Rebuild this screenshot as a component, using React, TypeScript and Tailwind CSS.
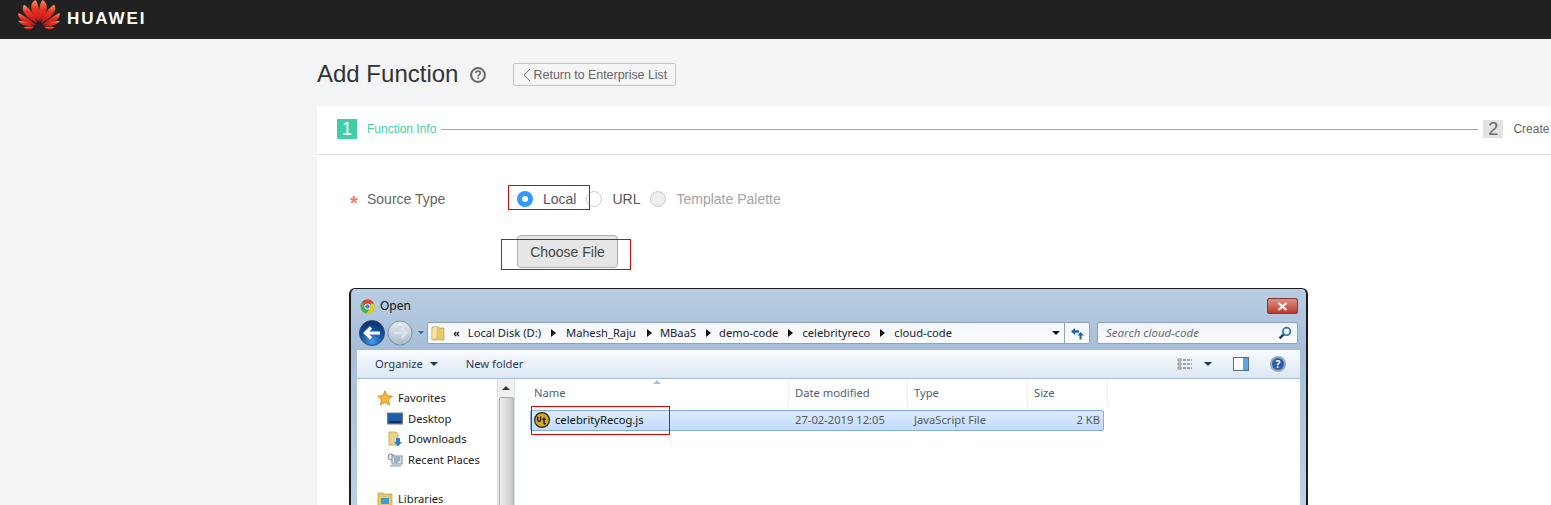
import React from 'react'

const sans = { fontFamily: '"Liberation Sans", Arial, sans-serif' }
const ui = { fontFamily: '"Noto Sans", sans-serif' }

const HuaweiLogo = () => (
  <svg width="42" height="30" viewBox="0 0 42 30" className="shrink-0">
    <defs>
      <linearGradient id="petal" x1="0" y1="0" x2="0" y2="1">
        <stop offset="0" stopColor="#f29a63" />
        <stop offset="0.4" stopColor="#e8331f" />
        <stop offset="1" stopColor="#c4161c" />
      </linearGradient>
    </defs>
    {[false, true].map((flip) => (
      <g key={String(flip)} transform={flip ? 'matrix(-1 0 0 1 42 0)' : undefined} fill="url(#petal)">
        <path d="M20.5 21.5 C15.5 17 12.4 10 13.4 5.2 C14 2.8 15.6 0.6 17.4 0 C21 4 22 14 20.5 21.5Z" />
        <path d="M18.9 23 C12.6 20 6 15 4.8 9.8 C4.4 8 5 6.2 6 4.6 C11 8 17.6 15.6 18.9 23Z" />
        <path d="M17.8 25 C11 24.6 3 21.6 0.8 16.8 C0.2 15.4 0.2 14.2 0.4 13 C5.6 15.4 13.6 20.4 17.8 25Z" />
        <path d="M16.8 26.4 C10.6 27 3.6 25.6 0 21 C6 20.4 12 23.4 16.8 26.4Z" />
        <path d="M15.6 27.4 C12.6 30 8.6 30 5.6 27.4 C9 26.6 12.4 26.8 15.6 27.4Z" />
      </g>
    ))}
  </svg>
)

const HelpIcon = () => (
  <svg width="16" height="16" viewBox="0 0 16 16" className="shrink-0">
    <circle cx="8" cy="8" r="6.9" fill="none" stroke="#666" strokeWidth="2" />
    <path d="M5.8 6.3 C5.8 4.8 6.8 4.1 8 4.1 C9.3 4.1 10.3 4.9 10.3 6.1 C10.3 7.6 8.1 7.7 8.1 9.5" fill="none" stroke="#666" strokeWidth="1.6" />
    <rect x="7.3" y="10.4" width="1.6" height="1.6" fill="#666" />
  </svg>
)

const ChromeIcon = () => (
  <svg width="15" height="15" viewBox="0 0 16 16" className="shrink-0">
    <circle cx="8" cy="8" r="7.5" fill="#4caf50" />
    <path d="M8 .5 A7.5 7.5 0 0 1 14.9 5 L8 5 A3 3 0 0 0 5.3 6.8 L2.4 3 A7.5 7.5 0 0 1 8 .5Z" fill="#e0442e" />
    <path d="M14.9 5 A7.5 7.5 0 0 1 7.2 15.5 L10.6 9.5 A3 3 0 0 0 10.6 5Z" fill="#f5c518" />
    <circle cx="8" cy="8" r="3.2" fill="#fff" />
    <circle cx="8" cy="8" r="2.4" fill="#3f83e8" />
  </svg>
)

const NavButtons = () => (
  <svg width="68" height="26" viewBox="0 0 68 26" className="shrink-0">
    <defs>
      <radialGradient id="backFill" cx="0.5" cy="0.85" r="0.8">
        <stop offset="0" stopColor="#3f9be8" />
        <stop offset="0.6" stopColor="#15509f" />
        <stop offset="1" stopColor="#0c2f6e" />
      </radialGradient>
      <linearGradient id="fwdFill" x1="0" y1="0" x2="0" y2="1">
        <stop offset="0" stopColor="#e4ebf3" />
        <stop offset="1" stopColor="#a9bacb" />
      </linearGradient>
    </defs>
    <circle cx="41" cy="13" r="12" fill="url(#fwdFill)" stroke="#7e8fa1" />
    <path d="M34 13 H47 M42.5 8.5 L47.5 13 L42.5 17.5" fill="none" stroke="#dbe3ea" strokeWidth="2.6" />
    <circle cx="13" cy="13" r="12.5" fill="url(#backFill)" stroke="#2d4f80" />
    <path d="M21 13 H7 M12 7.5 L6.4 13 L12 18.5" fill="none" stroke="#fff" strokeWidth="3.2" />
    <path d="M58 10.5 H66 L62 15Z" fill="#2c6db0" stroke="#dce8f3" strokeWidth="0.6" />
  </svg>
)

const FolderIcon = ({ size = 14 }: { size?: number }) => (
  <svg width={size} height={size + 2} viewBox="0 0 14 16" className="shrink-0">
    <path d="M1 2 H7 L8 3 H13 V15 H1Z" fill="#e9c86a" stroke="#b89a45" strokeWidth="0.6" />
    <path d="M1 15 L1 3 L6 1 V13Z" fill="#f6e3a2" stroke="#c8a955" strokeWidth="0.5" />
  </svg>
)

const Crumb = ({ text, left, right }: { text: string; left: number; right: number }) => (
  <>
    <span>{text}</span>
    <span className="border-y-[4px] border-l-[5px] border-y-transparent border-l-[#111] shrink-0" style={{ marginLeft: left, marginRight: right }} />
  </>
)

const AddressBar = () => (
  <div className="flex-1 h-[22px] flex items-center bg-gradient-to-b from-[#f3f7fb] to-[#fbfcfe] border border-[#8ea3b8] rounded-[2px] text-[11.2px] text-[#1a1a2a] pl-[3px]" style={ui}>
    <FolderIcon />
    <span className="ml-[8px] mr-[8px] font-bold text-[11px]">«</span>
    <Crumb text="Local Disk (D:)" left={10} right={10} />
    <Crumb text="Mahesh_Raju" left={11} right={8} />
    <Crumb text="MBaaS" left={10} right={8} />
    <Crumb text="demo-code" left={10} right={9} />
    <Crumb text="celebrityreco" left={10} right={9} />
    <span>cloud-code</span>
    <span className="ml-auto mr-[4px] border-x-[4px] border-t-[4px] border-x-transparent border-t-[#111]" />
    <div className="w-[25px] h-full border-l border-[#8ea3b8] flex items-center justify-center">
      <svg width="15" height="15" viewBox="0 0 15 15">
        <path d="M1 5.5 L5 2 V4.2 H9 V6.8 H5 V9Z" fill="#2a5f9e" />
        <path d="M14 9.5 L10.5 6 L7.5 9.5 H9.5 V13.5 H11.5 V9.5Z" fill="#2a5f9e" />
      </svg>
    </div>
  </div>
)

const SearchBox = () => (
  <div className="w-[201px] h-[22px] ml-[7px] flex items-center justify-between pl-[8px] pr-[5px] bg-gradient-to-b from-[#eef3f8] to-[#fbfcfe] border border-[#8ea3b8] rounded-[2px]">
    <span className="italic text-[11.5px] text-[#6d6d6d]" style={ui}>Search cloud-code</span>
    <svg width="14" height="14" viewBox="0 0 14 14">
      <circle cx="8.6" cy="5.4" r="3.7" fill="none" stroke="#2f74b5" strokeWidth="1.8" />
      <path d="M5.6 8.4 L1.6 12.4" stroke="#1e3f6e" strokeWidth="2.4" />
    </svg>
  </div>
)

const Toolbar = () => (
  <div className="h-[29px] flex items-center pl-[18px] pr-[14px] bg-gradient-to-b from-[#f9fbfe] to-[#dce7f3] border-b border-[#a9bfd6] text-[11.2px] text-[#1e395b]" style={ui}>
    <span>Organize</span>
    <span className="ml-[7px] border-x-[4px] border-t-[4px] border-x-transparent border-t-[#1e395b]" />
    <span className="ml-[28px]">New folder</span>
    <svg width="16" height="14" viewBox="0 0 16 14" className="ml-auto">
      <path d="M1 2h3v2H1zM1 6h3v2H1zM1 10h3v2H1z" fill="#fff" stroke="#555" strokeWidth="0.7" />
      <path d="M6 3h9M6 7h9M6 11h9" stroke="#555" strokeWidth="1" strokeDasharray="3 1" />
    </svg>
    <span className="ml-[11px] border-x-[4px] border-t-[4px] border-x-transparent border-t-[#1e395b]" />
    <div className="ml-[21px] w-[16px] h-[14px] border border-[#4f6f8c] bg-white flex justify-end">
      <div className="w-[5px] bg-[#5aa9dc]" />
    </div>
    <div className="ml-[21px] w-[16px] h-[16px] rounded-full bg-[#2a5db0] border-2 border-[#9aa7b5] text-white text-[10px] font-bold flex items-center justify-center leading-none">?</div>
  </div>
)

const SideIcon = ({ kind }: { kind: string }) => {
  if (kind === 'star') {
    return (
      <svg width="16" height="16" viewBox="0 0 16 16" className="shrink-0">
        <path d="M8 .8 L10.2 5.6 L15.4 6.2 L11.5 9.7 L12.6 15 L8 12.3 L3.4 15 L4.5 9.7 L.6 6.2 L5.8 5.6Z" fill="#f6b73c" stroke="#d77f24" strokeWidth="0.8" />
      </svg>
    )
  }
  if (kind === 'desktop') {
    return (
      <svg width="16" height="14" viewBox="0 0 16 14" className="shrink-0">
        <rect x="0.5" y="1" width="15" height="11" fill="#1f5fa8" stroke="#6a7a8a" />
        <rect x="2" y="9" width="12" height="2" fill="#0c2f58" />
      </svg>
    )
  }
  if (kind === 'recent') {
    return (
      <svg width="16" height="15" viewBox="0 0 16 15" className="shrink-0">
        <circle cx="4" cy="4" r="3" fill="#e6e6e6" stroke="#888" />
        <rect x="5" y="3" width="10" height="8" fill="#dbe6f0" stroke="#7d8b99" />
        <path d="M7 5h6M7 7h6M7 9h4" stroke="#4a7fb0" />
        <rect x="3" y="12" width="11" height="2" fill="#bcc6d0" />
      </svg>
    )
  }
  if (kind === 'library') {
    return (
      <svg width="16" height="16" viewBox="0 0 16 16" className="shrink-0">
        <path d="M1 2 H6 L7 3 H15 V15 H1Z" fill="#e9c86a" stroke="#b89a45" strokeWidth="0.7" />
        <rect x="4" y="7" width="8" height="6" fill="#3f9fc9" />
      </svg>
    )
  }
  return (
    <svg width="16" height="16" viewBox="0 0 16 16" className="shrink-0">
      <path d="M2 1 H9 L11 3 V14 H2Z" fill="#ecd386" stroke="#b89a45" strokeWidth="0.7" />
      <path d="M9 7 H13 V11 H15 L11 15.5 L7 11 H9Z" fill="#2f7fd0" />
    </svg>
  )
}

const SideItem = ({ icon, label, sub, className = '' }: { icon: string; label: string; sub?: boolean; className?: string }) => (
  <div className={`flex items-center h-[20px] gap-[5px] ${sub ? 'pl-[30px]' : 'pl-[20px]'} ${className}`}>
    <SideIcon kind={icon} />
    <span>{label}</span>
  </div>
)

const Sidebar = () => (
  <div className="w-[158px] shrink-0 flex bg-white border-r border-[#d9e3ee] text-[11.2px] text-[#1a1a1a]" style={ui}>
    <div className="flex-1 pt-[9px]">
      <SideItem icon="star" label="Favorites" />
      <SideItem icon="desktop" label="Desktop" sub className="mt-[1px]" />
      <SideItem icon="downloads" label="Downloads" sub />
      <SideItem icon="recent" label="Recent Places" sub className="mt-[1px]" />
      <div className="h-[19px]" />
      <SideItem icon="library" label="Libraries" />
    </div>
    <div className="w-[17px] bg-[#f0f0f0] border-l border-[#dcdcdc] flex flex-col items-center">
      <span className="mt-[7px] border-x-[4px] border-b-[4px] border-x-transparent border-b-[#333]" />
      <div className="mt-[7px] w-[15px] h-[140px] bg-gradient-to-r from-[#eeeeee] to-[#c8c8c8] border border-[#a9a9a9] rounded-[2px]" />
    </div>
  </div>
)

const UltraEditIcon = () => (
  <svg width="16" height="16" viewBox="0 0 16 16" className="shrink-0">
    <circle cx="8" cy="8" r="7.4" fill="#d4a92a" stroke="#222" strokeWidth="1.2" />
    <path d="M3.6 4.4 V8 C3.6 9.6 6.6 9.6 6.6 8 V4.4" fill="none" stroke="#111" strokeWidth="1.3" />
    <path d="M10 5.6 V11 C10 12 11 12 12 11.4 M8.4 7.4 H12" fill="none" stroke="#111" strokeWidth="1.3" />
  </svg>
)

const FileList = () => (
  <div className="flex-1 bg-white text-[11.2px]" style={ui}>
    <div className="relative h-[28px] flex items-center text-[#4c607a]">
      <div className="w-[274px] h-full pl-[19px] flex items-center border-r border-[#e9eff6]">Name</div>
      <div className="w-[119px] h-full pl-[6px] flex items-center border-r border-[#e9eff6]">Date modified</div>
      <div className="w-[120px] h-full pl-[6px] flex items-center border-r border-[#e9eff6]">Type</div>
      <div className="w-[80px] h-full pl-[6px] flex items-center border-r border-[#e9eff6]">Size</div>
      <span className="absolute left-[138px] top-[1px] border-x-[4px] border-b-[4px] border-x-transparent border-b-[#9cc6e8]" />
    </div>
    <div className="ml-[15px] mt-[3px] w-[574px] h-[21px] flex items-center bg-gradient-to-b from-[#dcebfc] to-[#c1dcfb] border border-[#84acdd] rounded-[2px] text-[#5a5a5a]">
      <div className="w-[258px] pl-[3px] flex items-center gap-[5px] text-[#111]">
        <UltraEditIcon />
        <span>celebrityRecog.js</span>
      </div>
      <div className="w-[119px] pl-[6px]">27-02-2019 12:05</div>
      <div className="w-[120px] pl-[6px]">JavaScript File</div>
      <div className="flex-1 text-right pr-[3px]">2 KB</div>
    </div>
  </div>
)

const OpenDialog = () => (
  <div className="w-[959px] h-[300px] shrink-0 -ml-[1px] border-x-2 border-t border-[#1b1b1b] rounded-t-[6px] bg-gradient-to-b from-[#b8cde2] via-[#a6bed8] via-[20%] to-[#c8dbeb] px-[6px] overflow-hidden">
    <div className="h-[31px] pt-[3px] flex items-center pl-[3px] pr-[2px] gap-[5px]">
      <ChromeIcon />
      <span className="text-[12px] text-[#111]" style={ui}>Open</span>
      <div className="ml-auto w-[31px] h-[16px] bg-gradient-to-b from-[#dc8f85] to-[#b9392c] border border-[#7c3a35] rounded-[2px] flex items-center justify-center">
        <svg width="11" height="9" viewBox="0 0 11 9">
          <path d="M1.5 1 L9.5 8 M9.5 1 L1.5 8" stroke="#fff" strokeWidth="2.2" />
        </svg>
      </div>
    </div>
    <div className="h-[26px] flex items-center pl-[2px] pr-[2px]">
      <NavButtons />
      <AddressBar />
      <SearchBox />
    </div>
    <div className="h-[4px]" />
    <Toolbar />
    <div className="flex h-[200px]">
      <Sidebar />
      <FileList />
    </div>
  </div>
)

const Step = () => (
  <div className="h-[49px] pb-[2px] flex items-center pl-[20px] border-b border-[#e2e2e2] overflow-hidden">
    <div className="w-[20px] h-[20px] shrink-0 bg-[#3ecfa5] text-white text-[18px] flex items-center justify-center">1</div>
    <span className="ml-[10px] text-[12px] text-[#3ecfa5] whitespace-nowrap">Function Info</span>
    <div className="ml-[5px] w-[1037px] h-px shrink-0 bg-[#b49aa8]" />
    <div className="ml-[5px] w-[20px] h-[18px] shrink-0 bg-[#e2e2e2] text-[#666] text-[18px] flex items-center justify-center">2</div>
    <span className="ml-[10px] text-[12px] text-[#666] whitespace-nowrap">Create</span>
  </div>
)

const RedBox = ({ className }: { className: string }) => (
  <div className={`absolute border border-[#e60000] pointer-events-none ${className}`} />
)

const Radio = ({ state }: { state: 'on' | 'off' | 'disabled' }) => {
  if (state === 'on') return <span className="w-[16px] h-[16px] shrink-0 rounded-full border-[5px] border-[#3399ff] bg-white" />
  if (state === 'off') return <span className="w-[16px] h-[16px] shrink-0 rounded-full border border-[#cccccc] bg-white" />
  return <span className="w-[16px] h-[16px] shrink-0 rounded-full border border-[#cccccc] bg-[#eeeeee]" />
}

const SourceType = () => (
  <div className="h-[26px] flex items-center text-[14px]">
    <span className="w-[17px] pl-[33px] box-content text-[#f47c7c] text-[20px] font-bold leading-none mt-[7px]">*</span>
    <span className="text-[#666] w-[150px]">Source Type</span>
    <div className="relative flex items-center">
      <Radio state="on" />
      <span className="ml-[10px] text-[#555]">Local</span>
      <span className="ml-[10px]" />
      <Radio state="off" />
      <span className="ml-[10px] text-[#555]">URL</span>
      <span className="ml-[10px]" />
      <Radio state="disabled" />
      <span className="ml-[10px] text-[#a3a3a3]">Template Palette</span>
      <RedBox className="-left-[9px] -top-[4px] w-[82px] h-[25px]" />
    </div>
  </div>
)

const ChooseFile = () => (
  <div className="relative ml-[200px] mt-[23px] w-[101px] h-[33px]">
    <button className="w-full h-full pt-[1px] bg-[#e6e6e6] border border-[#adadad] rounded-[4px] text-[14px] text-[#444]">Choose File</button>
    <RedBox className="-left-[16px] top-[4px] w-[130px] h-[31px]" />
  </div>
)

export default function App() {
  return (
    <div className="h-[505px] w-full overflow-hidden bg-[#f3f4f6] flex flex-col" style={sans}>
      <header className="h-[39px] shrink-0 bg-[#212121] flex items-start pl-[18px]">
        <HuaweiLogo />
        <span className="ml-[7px] mt-[9px] text-white font-bold text-[17px] leading-[20px] tracking-[1.9px]">HUAWEI</span>
      </header>
      <main className="flex-1 min-h-0 pl-[317px] flex flex-col">
        <div className="h-[67px] pt-[4px] shrink-0 flex items-center">
          <h1 className="text-[24px] text-[#333] mb-[2px]">Add Function</h1>
          <span className="ml-[12px]"><HelpIcon /></span>
          <button className="ml-[27px] w-[163px] h-[23px] pt-[1px] flex items-center justify-center gap-[3px] bg-[#f5f5f5] border border-[#c4c4c4] rounded-[2px] text-[12.4px] text-[#666]">
            <svg width="8" height="14" viewBox="0 0 8 14">
              <path d="M7 1 L1 7 L7 13" fill="none" stroke="#777" strokeWidth="1" />
            </svg>
            Return to Enterprise List
          </button>
        </div>
        <section className="flex-1 bg-white overflow-hidden">
          <Step />
          <div className="pt-[31px]">
            <SourceType />
            <ChooseFile />
            <div className="relative ml-[33px] mt-[20px]">
              <OpenDialog />
              <RedBox className="left-[181px] top-[118px] w-[139px] h-[29px]" />
            </div>
          </div>
        </section>
      </main>
    </div>
  )
}
